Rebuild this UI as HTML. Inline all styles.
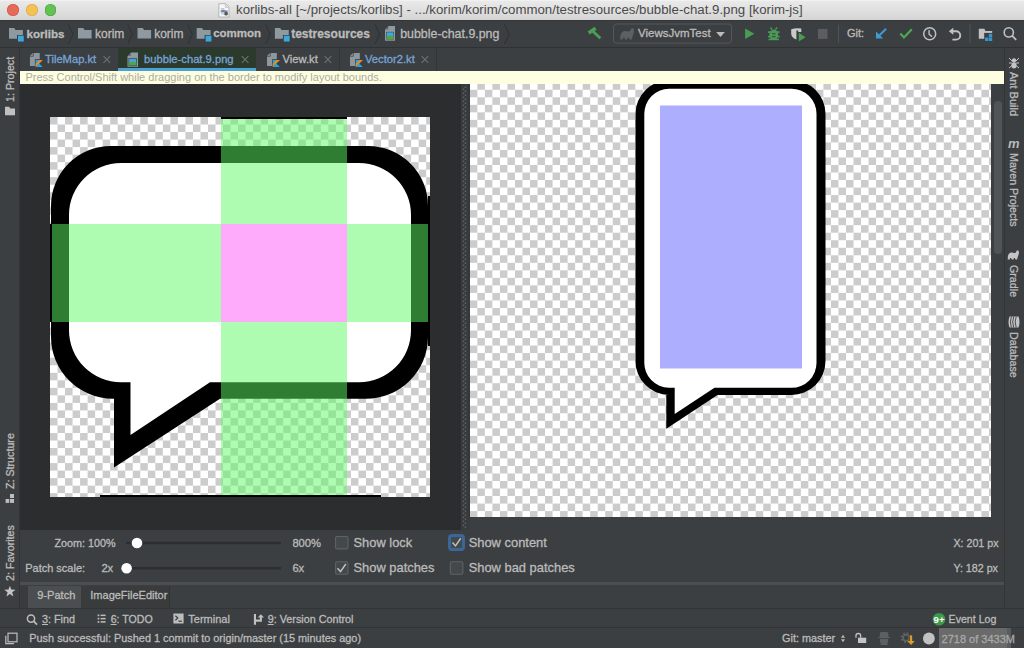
<!DOCTYPE html>
<html><head><meta charset="utf-8">
<style>
*{box-sizing:border-box}
html,body{margin:0;padding:0}
body{width:1024px;height:648px;overflow:hidden;position:relative;background:#3c3f41;font-family:"Liberation Sans",sans-serif;color:#bbbbbb}
.a{position:absolute}
.t{position:absolute;white-space:nowrap;line-height:1;-webkit-text-stroke:0.3px currentColor}
svg{position:absolute;overflow:visible}
.chk{background-image:conic-gradient(#cccccc 0 25%,#ffffff 0 50%,#cccccc 0 75%,#ffffff 0);background-size:15.05px 15.05px}
.chk2{background-image:conic-gradient(#ffffff 0 25%,#cccccc 0 50%,#ffffff 0 75%,#cccccc 0);background-size:15.05px 15.05px}
</style></head><body>

<!-- TITLE BAR -->
<div class="a" style="left:0;top:0;width:1024px;height:21px;background:linear-gradient(#f4f4f4 0,#e9e9e9 1.5px,#d5d5d5 19.5px);border-bottom:1px solid #343638"></div>
<div class="a" style="left:7.2px;top:4.4px;width:11.9px;height:11.9px;border-radius:50%;background:#e46b5c;box-shadow:inset 0 0 0 0.6px #cf5546"></div>
<div class="a" style="left:25.9px;top:4.4px;width:11.9px;height:11.9px;border-radius:50%;background:#f3c255;box-shadow:inset 0 0 0 0.6px #d9a53c"></div>
<div class="a" style="left:44.6px;top:4.4px;width:11.9px;height:11.9px;border-radius:50%;background:#63c254;box-shadow:inset 0 0 0 0.6px #4ea43f"></div>
<svg style="left:0;top:0" width="300" height="22"><path d="M218.9 3.7H225.6L229 7.1V17H218.9Z" fill="#f7f7f7" stroke="#a8a8a8" stroke-width="0.8"/><path d="M225.3 3.9V7.4H228.8" fill="#e0e0e0" stroke="#b5b5b5" stroke-width="0.6"/><rect x="220.8" y="8" width="3.6" height="1.6" fill="#d9c9a8"/><path d="M220.8 10.3Q223 9.2 225.5 10.2Q227 10.6 227.6 10.2V12.6H220.8Z" fill="#6f86c9"/><rect x="221.2" y="12.6" width="3" height="2" fill="#c9d2dc"/><circle cx="226.1" cy="13.7" r="1.9" fill="#5a5a52"/></svg>
<div class="t" style="left:236px;top:2.8px;font-size:13.25px;color:#4a4a4a;-webkit-text-stroke:0">korlibs-all [~/projects/korlibs] - .../korim/korim/common/testresources/bubble-chat.9.png [korim-js]</div>

<!-- NAV BAR -->
<div class="a" style="left:0;top:47px;width:1024px;height:1px;background:#2f3133"></div>
<div id="nav">
<svg style="left:0;top:0" width="1024" height="48">
 <defs>
  <g id="fold"><path d="M0 0H5.2L6.6 2H13.6V10.6H0Z" fill="#8e99a0"/></g>
  <g id="mfold"><path d="M0 0H5.2L6.6 2H13.9V10.8H0Z" fill="#8e99a0"/><rect x="8" y="7" width="7.2" height="7" fill="#2f3133"/><rect x="8.8" y="7.6" width="6" height="6" fill="#3da7d8"/></g>
  <path id="chev" d="M0 0L4.6 9.8L0 19.6" fill="none" stroke="#2e3032" stroke-width="1"/>
 </defs>
 <use href="#mfold" x="9" y="28"/>
 <use href="#chev" x="68.5" y="24.4"/>
 <use href="#fold" x="78" y="28"/>
 <use href="#chev" x="127.8" y="24.4"/>
 <use href="#fold" x="137.5" y="28"/>
 <use href="#chev" x="187.8" y="24.4"/>
 <use href="#mfold" x="196.7" y="28"/>
 <use href="#chev" x="265.7" y="24.4"/>
 <use href="#mfold" x="274.9" y="28"/>
 <use href="#chev" x="375" y="24.4"/>
 <g transform="translate(385,26.1)">
  <path d="M3.5 0H10V14.6H0V3.5Z" fill="#8e99a0"/>
  <path d="M0 3.3L3.3 0V3.3Z" fill="#3c3f41" opacity="0.5"/>
  <rect x="1.2" y="5.8" width="7.8" height="7.4" fill="#2f3133"/>
  <rect x="1.6" y="6.2" width="7" height="6.6" fill="#43a6db"/>
  <path d="M1.6 10.6Q4 8.4 8.6 10.4V12.8H1.6Z" fill="#4fa83f"/>
 </g>
 <use href="#chev" x="504.5" y="24.4"/>
 <!-- hammer -->
 <path d="M588.6 33L595.6 28.2" stroke="#4a9f52" stroke-width="3.6"/><path d="M592.2 30.8L600.4 38.3" stroke="#4a9f52" stroke-width="2.9"/>
 <!-- dropdown -->
 <rect x="613.5" y="24" width="118" height="19.2" rx="3" fill="none" stroke="#55585a" stroke-width="1"/>
 <path d="M620.2 39.6L620.5 35.2Q621.4 31.2 625 31L628.4 31.6Q630.4 31.4 631 29.2Q632 27.4 633.4 28.6Q634.6 30 633.7 33.2L632.6 36.2L631.8 39.6H629.7L629.1 37.6H627.9L627.3 39.6H625L624.5 37.8H623.3L622.7 39.6Z" fill="#5d6062"/>
 <path d="M716.1 32H724.9L720.5 37.1Z" fill="#bbbbbb"/>
 <!-- run -->
 <path d="M745.1 28.5L754.4 33.8L745.1 39.1Z" fill="#499c54"/>
 <!-- debug bug -->
 <g fill="#499c54">
  <ellipse cx="773.8" cy="34.6" rx="4.4" ry="5.2"/>
  <rect x="768" y="31.3" width="11.6" height="1.6"/>
  <rect x="768" y="35.8" width="11.6" height="1.6"/>
  <rect x="768.6" y="38.6" width="10.4" height="1.6"/>
  <path d="M770.5 27.5L772.2 29.6M777.1 27.5L775.4 29.6" stroke="#499c54" stroke-width="1.4"/>
 </g>
 <path d="M772 33.8H775.6M772 36.7H775.6" stroke="#3c3f41" stroke-width="1"/>
 <!-- coverage -->
 <path d="M791.2 29.2Q796 27.6 801.3 28.6V32H798.2V30.4H796.4V39.6Q791.2 37.6 791.2 33.5Z" fill="#c9c9c9"/>
 <path d="M798.8 32.8L805.6 37.2L798.8 41.5Z" fill="#499c54"/>
 <!-- stop -->
 <rect x="818" y="28.9" width="9.5" height="10" fill="#5b5d5f"/>
 <rect x="838" y="24.7" width="1" height="18" fill="#515456"/>
 <!-- git arrow -->
 <path d="M886.1 28.8L877.2 37.6" stroke="#3d9bd6" stroke-width="2" fill="none"/>
 <path d="M876 31.4V38.6H883.2Z" fill="#3d9bd6"/>
 <!-- check -->
 <path d="M900.3 33.6L904 37.4L911.8 29.3" stroke="#4da953" stroke-width="2.2" fill="none"/>
 <!-- clock -->
 <circle cx="929.7" cy="33.7" r="6" fill="none" stroke="#c1c1c1" stroke-width="1.5"/>
 <path d="M929.1 30V34.2L932 36.6" stroke="#c1c1c1" stroke-width="1.4" fill="none"/>
 <!-- undo -->
 <path d="M951 31.3H956.1A4.15 4.15 0 0 1 956.1 39.6H952.4" stroke="#c1c1c1" stroke-width="1.9" fill="none"/>
 <path d="M948.8 31.3L953.3 27.8V34.8Z" fill="#c1c1c1"/>
 <rect x="969.5" y="24.5" width="1" height="18.3" fill="#515456"/>
 <!-- project structure folder -->
 <path d="M978.8 28.8H984.4L985.4 30.9H992.2V38.8H978.8Z" fill="#c0c2c4"/>
 <rect x="984.2" y="32.9" width="9" height="9" fill="#3c3f41"/>
 <rect x="985" y="37.5" width="3.4" height="3.5" fill="#3596cc"/>
 <rect x="988.8" y="33.8" width="3.4" height="3.4" fill="#3596cc"/>
 <rect x="988.8" y="37.5" width="3.4" height="3.5" fill="#3596cc"/>
 <!-- search -->
 <circle cx="1008.8" cy="32.4" r="4.6" fill="none" stroke="#c0c0c0" stroke-width="1.6"/>
 <path d="M1012.2 35.8L1016.2 39.8" stroke="#c0c0c0" stroke-width="1.8"/>
</svg>
<div class="t" style="left:26.5px;top:28.2px;font-size:11.6px;font-weight:bold">korlibs</div>
<div class="t" style="left:95px;top:28.2px;font-size:12px">korim</div>
<div class="t" style="left:154.2px;top:28.2px;font-size:12px">korim</div>
<div class="t" style="left:213.2px;top:28.2px;font-size:11.5px;font-weight:bold">common</div>
<div class="t" style="left:291.2px;top:28.2px;font-size:12px;font-weight:bold">testresources</div>
<div class="t" style="left:400.2px;top:28.2px;font-size:12.4px">bubble-chat.9.png</div>
<div class="t" style="left:638px;top:28.2px;font-size:11.5px">ViewsJvmTest</div>
<div class="t" style="left:847px;top:28.2px;font-size:11px">Git:</div>
</div>

<!-- TABS ROW -->
<div class="a" style="left:20px;top:48px;width:98px;height:23px;background:#3c3f41"></div>
<div class="a" style="left:118px;top:48px;width:138px;height:23px;background:#2b3a2d"></div>
<div class="a" style="left:118px;top:68px;width:138px;height:3px;background:#4aa3d4"></div>
<div class="a" style="left:339px;top:48px;width:1px;height:23px;background:#333537"></div>
<div class="a" style="left:436px;top:48px;width:1px;height:23px;background:#333537"></div>
<div class="t" style="left:45px;top:54.2px;font-size:11.2px;color:#78a4d5">TileMap.kt</div>
<div class="t" style="left:144px;top:54.2px;font-size:11.2px;color:#78a4d5">bubble-chat.9.png</div>
<div class="t" style="left:282.5px;top:54.2px;font-size:11.2px;color:#bbbbbb">View.kt</div>
<div class="t" style="left:365px;top:54.2px;font-size:11.2px;color:#78a4d5">Vector2.kt</div>


<svg style="left:0;top:0" width="1024" height="100">
 <defs>
  <g id="ktf">
   <path d="M3.6 0H9.8V13H0V3.6Z" fill="#8e979e"/>
   <path d="M0 3.1L3.1 0V3.1Z" fill="#8e979e"/>
   <path d="M0 3.35H3.35V0" stroke="#3c3f41" stroke-width="0.7" fill="none"/>
   <rect x="5" y="6.3" width="8" height="8" fill="#3c3f41"/>
   <path d="M5.7 7H12.8L5.7 14.1Z" fill="#18a8f0"/>
   <path d="M5.7 14.1L9.25 10.55L12.8 14.1Z" fill="#18a8f0"/>
   <path d="M9.6 7H12.8L5.7 14.1V10.9Z" fill="#f0891c"/>
  </g>
  <path id="cls" d="M0 0L6.6 6.6M6.6 0L0 6.6" stroke="#6e7072" stroke-width="1.1"/>
 </defs>
 <use href="#ktf" x="29.9" y="52.9"/>
 <use href="#ktf" x="267" y="52.9"/>
 <use href="#ktf" x="350" y="52.9"/>
 <g transform="translate(127.5,52.6)">
  <path d="M3.5 0H10.5V14.2H0V3.5Z" fill="#8e99a0"/>
  <path d="M0 3.3L3.3 0V3.3Z" fill="#3c3f41" opacity="0.5"/>
  <rect x="1.1" y="5.6" width="8.3" height="7.6" fill="#2b2d2e"/>
  <rect x="1.6" y="6.1" width="7.3" height="6.6" fill="#43a6db"/>
  <path d="M1.6 10.4Q4 8.2 8.9 10.2V12.7H1.6Z" fill="#4fa83f"/>
 </g>
 <use href="#cls" x="103.5" y="56.2"/>
 <use href="#cls" x="241.8" y="56.2"/>
 <use href="#cls" x="324.6" y="56.2"/>
 <use href="#cls" x="421.6" y="56.2"/>
</svg>

<!-- YELLOW BAR -->
<div class="a" style="left:20px;top:71px;width:984px;height:13px;background:#fefee0"></div>
<div class="t" style="left:25.4px;top:72.3px;font-size:11px;color:#acaca4;-webkit-text-stroke:0">Press Control/Shift while dragging on the border to modify layout bounds.</div>

<!-- LEFT EDITOR -->
<div class="a" style="left:20px;top:84px;width:441px;height:446px;background:#2c2d2f"></div>
<div class="a chk2" style="left:50px;top:117px;width:380px;height:380px"></div>
<svg style="left:0;top:0" width="1024" height="648">
 <path d="M111 146H368A60 60 0 0 1 428 206V337A62 62 0 0 1 366 398.7H220L114 467.5V398.7H113A62 62 0 0 1 51 336.7V206A60 60 0 0 1 111 146Z" fill="#000"/>
 <path d="M121 163H359A52 52 0 0 1 411 215V330.3A52 52 0 0 1 359 382.3H210L130.5 435V382.3H121A52 52 0 0 1 69 330.3V215A52 52 0 0 1 121 163Z" fill="#fff"/>
 <rect x="221" y="117" width="126" height="380" fill="rgba(92,250,100,0.5)"/>
 <rect x="50" y="224" width="171" height="98" fill="rgba(92,250,100,0.5)"/>
 <rect x="347" y="224" width="83" height="98" fill="rgba(92,250,100,0.5)"/>
 <rect x="221" y="224" width="126" height="98" fill="#ffabfb"/>
 <rect x="221" y="117" width="126" height="2" fill="#000"/>
 <rect x="50" y="224" width="2" height="98" fill="#000"/>
 <rect x="428" y="196" width="2" height="150" fill="#000"/>
 <rect x="100" y="495" width="281" height="2" fill="#000"/>
</svg>

<!-- SPLITTER -->
<div class="a" style="left:460.6px;top:84px;width:9.4px;height:446px;background:#393c3e"></div><div class="a" style="left:468.4px;top:84px;width:1.6px;height:433px;background:#353739"></div>
<svg style="left:0;top:0" width="1024" height="648"><defs><pattern id="dots" x="460" y="84" width="8" height="4" patternUnits="userSpaceOnUse"><circle cx="3.4" cy="1.2" r="0.8" fill="#626668"/><circle cx="5.4" cy="3.2" r="0.8" fill="#626668"/></pattern></defs><rect x="462" y="86" width="5" height="442" fill="url(#dots)"/></svg>

<!-- RIGHT PREVIEW -->
<div class="a chk" style="left:470px;top:84px;width:521px;height:433px;background-position:-0.2px -1.75px"></div>
<svg style="left:0;top:0" width="1024" height="648">
 <path d="M669 80H791A34 34 0 0 1 825.5 114V361A34 34 0 0 1 791 395H717.5L666.3 428.7V395H669A34 34 0 0 1 635.5 361V114A34 34 0 0 1 669 80Z" fill="#000"/>
 <path d="M669 88.7H791A25 25 0 0 1 816.5 114V362A25 25 0 0 1 791 387.8H714.5L674.7 414V387.8H669A25 25 0 0 1 644.3 362V114A25 25 0 0 1 669 88.7Z" fill="#fff"/>
 <rect x="660" y="105.5" width="142" height="263" fill="#aeaeff"/>
</svg>
<div class="a" style="left:470px;top:71px;width:534px;height:13px;background:#fefee0"></div>
<div class="a" style="left:994px;top:101px;width:8px;height:153px;border-radius:4px;background:#515457"></div>

<!-- CONTROLS -->
<div class="a" style="left:20px;top:530px;width:984px;height:52px;background:#3c3f41"></div>
<div class="a" style="left:20px;top:582px;width:984px;height:3px;background:#4b4e50"></div>

<!-- BOTTOM TABS -->
<div class="a" style="left:20px;top:585px;width:984px;height:23px;background:#3c3f41"></div>

<!-- LEFT SIDEBAR -->
<div class="a" style="left:0;top:48px;width:20px;height:560px;background:#3c3f41;border-right:1px solid #323436"></div>
<!-- RIGHT SIDEBAR -->
<div class="a" style="left:1004px;top:48px;width:20px;height:560px;background:#3c3f41;border-left:1px solid #323436"></div>

<!-- TOOL WINDOW BAR -->
<div class="a" style="left:0;top:608px;width:1024px;height:20px;background:#3c3f41;border-top:1px solid #323436;border-bottom:1px solid #323436"></div>


<!-- SIDEBAR CONTENT -->
<div class="t" style="left:4.6px;top:101.5px;font-size:10.7px;transform-origin:0 0;transform:rotate(-90deg)">1: Project</div>
<div class="t" style="left:4.6px;top:489px;font-size:10.7px;transform-origin:0 0;transform:rotate(-90deg)">Z: Structure</div>
<div class="t" style="left:4.6px;top:580.5px;font-size:10.7px;transform-origin:0 0;transform:rotate(-90deg)">2: Favorites</div>
<div class="t" style="left:1019.4px;top:72.3px;font-size:11px;transform-origin:0 0;transform:rotate(90deg)">Ant Build</div>
<div class="t" style="left:1019.4px;top:152.5px;font-size:10.7px;transform-origin:0 0;transform:rotate(90deg)">Maven Projects</div>
<div class="t" style="left:1019.4px;top:265.3px;font-size:10.7px;transform-origin:0 0;transform:rotate(90deg)">Gradle</div>
<div class="t" style="left:1019.4px;top:332px;font-size:10.7px;transform-origin:0 0;transform:rotate(90deg)">Database</div>
<svg style="left:0;top:0" width="1024" height="648">
 <!-- project folder -->
 <path d="M5 106.7H9L10.4 108.4H15V115.2H5Z" fill="#c0c0c0"/>
 <!-- structure -->
 <rect x="5.6" y="499" width="3.6" height="3.9" fill="#bdbdbd"/>
 <rect x="10" y="494" width="4" height="4" fill="#bdbdbd"/>
 <rect x="10" y="499" width="4" height="3.9" fill="#bdbdbd"/>
 <!-- star -->
 <path d="M9.9 585.7L11.3 589.6L15.6 589.7L12.2 592.3L13.4 596.4L9.9 594L6.4 596.4L7.6 592.3L4.2 589.7L8.5 589.6Z" fill="#c4c4c4"/>
 <!-- ant -->
 <g fill="#c4c4c4"><ellipse cx="1014" cy="60.5" rx="2.2" ry="2.2"/><ellipse cx="1014" cy="65.5" rx="2.6" ry="3"/><path d="M1009 58L1012 61M1019 58L1016 61M1009 63H1012M1016 63H1019M1009 68L1012 65.5M1019 68L1016 65.5" stroke="#c4c4c4" stroke-width="1"/></g>
 <!-- maven m -->
 <text x="1008" y="147.5" font-family="Liberation Sans" font-style="italic" font-weight="bold" font-size="13" fill="#b9b9b9">m</text>
 <!-- gradle elephant -->
 <path d="M620.2 39.6L620.5 35.2Q621.4 31.2 625 31L628.4 31.6Q630.4 31.4 631 29.2Q632 27.4 633.4 28.6Q634.6 30 633.7 33.2L632.6 36.2L631.8 39.6H629.7L629.1 37.6H627.9L627.3 39.6H625L624.5 37.8H623.3L622.7 39.6Z" fill="#c4c4c4" transform="translate(1007.7 249.7) scale(0.81) translate(-620.2 -27.4)"/>
 <!-- database -->
 <g transform="rotate(90 1014 322)"><path d="M1008.5 317.5Q1014 315.5 1019.5 317.5V326.5Q1014 328.5 1008.5 326.5Z" fill="#c4c4c4"/><path d="M1008.5 319.8Q1014 321.8 1019.5 319.8M1008.5 322.3Q1014 324.3 1019.5 322.3M1008.5 324.6Q1014 326.6 1019.5 324.6" stroke="#3c3f41" stroke-width="0.9" fill="none"/></g>
</svg>

<!-- CONTROLS CONTENT -->
<div class="t" style="left:54.5px;top:537.8px;font-size:10.8px">Zoom: 100%</div>
<div class="t" style="left:292.4px;top:537.8px;font-size:11.2px">800%</div>
<div class="t" style="left:25.2px;top:563.2px;font-size:11px">Patch scale:</div>
<div class="t" style="left:101.4px;top:563.2px;font-size:11.2px">2x</div>
<div class="t" style="left:292.4px;top:563.2px;font-size:11.2px">6x</div>
<div class="t" style="left:353.5px;top:536.8px;font-size:12.9px">Show lock</div>
<div class="t" style="left:468.7px;top:536.8px;font-size:12.9px">Show content</div>
<div class="t" style="left:353.5px;top:562.2px;font-size:12.9px">Show patches</div>
<div class="t" style="left:468.7px;top:562.2px;font-size:12.9px">Show bad patches</div>
<div class="t" style="left:953.4px;top:537.8px;font-size:10.7px">X: 201 px</div>
<div class="t" style="left:953.4px;top:562.8px;font-size:10.7px">Y: 182 px</div>
<svg style="left:0;top:0" width="1024" height="648">
 <rect x="126.2" y="541.8" width="154.6" height="2.4" fill="#2b2d2f"/>
 <rect x="121.8" y="567" width="159" height="2.4" fill="#2b2d2f"/>
 <circle cx="137" cy="543" r="5.3" fill="#ffffff"/>
 <circle cx="126.6" cy="568.2" r="5.3" fill="#ffffff"/>
 <rect x="335.6" y="536.5" width="12.4" height="12.4" rx="1.5" fill="#43484a" stroke="#5f6264" stroke-width="1.1"/>
 <rect x="335.6" y="561.8" width="12.4" height="12.4" rx="1.5" fill="#43484a" stroke="#5f6264" stroke-width="1.1"/>
 <path d="M337.5 568.3L340.5 571.6L345.8 564" stroke="#c0c0c0" stroke-width="1.5" fill="none"/>
 <rect x="449.5" y="535.5" width="14" height="14" rx="2.5" fill="#43484a" stroke="#3a6699" stroke-width="3"/>
 <path d="M452.5 542.6L455.5 545.9L460.8 538.3" stroke="#c0c0c0" stroke-width="1.5" fill="none"/>
 <rect x="450.4" y="561.8" width="12.4" height="12.4" rx="1.5" fill="#43484a" stroke="#5f6264" stroke-width="1.1"/>
</svg>

<!-- BOTTOM TABS CONTENT -->
<div class="a" style="left:20px;top:585.5px;width:8.3px;height:22.5px;background:#393b3d"></div>
<div class="a" style="left:28.3px;top:585.5px;width:53.1px;height:22.5px;background:#4b4e50"></div>
<div class="a" style="left:81.4px;top:585.5px;width:88.9px;height:22.5px;background:#393b3d;border-right:1px solid #323436"></div>
<div class="t" style="left:37.2px;top:589.5px;font-size:11.1px">9-Patch</div>
<div class="t" style="left:90.3px;top:589.5px;font-size:11px">ImageFileEditor</div>

<!-- TOOL WINDOW BAR CONTENT -->
<div class="t" style="left:42px;top:613.8px;font-size:10.8px"><u>3</u>: Find</div>
<div class="t" style="left:110.7px;top:613.8px;font-size:10.6px"><u>6</u>: TODO</div>
<div class="t" style="left:188.3px;top:613.8px;font-size:11px">Terminal</div>
<div class="t" style="left:267.7px;top:613.8px;font-size:10.8px"><u>9</u>: Version Control</div>
<div class="t" style="left:948.6px;top:613.8px;font-size:10.6px">Event Log</div>
<svg style="left:0;top:0" width="1024" height="648">
 <circle cx="31" cy="618.6" r="3.6" fill="none" stroke="#bdbdbd" stroke-width="1.5"/>
 <path d="M33.6 621.2L37 624.6" stroke="#bdbdbd" stroke-width="1.7"/>
 <g fill="#bdbdbd"><rect x="97.6" y="614.5" width="1.7" height="1.7"/><rect x="97.6" y="617.8" width="1.7" height="1.7"/><rect x="97.6" y="621.1" width="1.7" height="1.7"/><rect x="100.6" y="614.6" width="5" height="1.5"/><rect x="100.6" y="617.9" width="5" height="1.5"/><rect x="100.6" y="621.2" width="5" height="1.5"/></g>
 <rect x="173.4" y="613.5" width="10.2" height="10" fill="#bdbdbd"/>
 <path d="M175.4 615.8L177.8 618L175.4 620.2" stroke="#3c3f41" stroke-width="1.2" fill="none"/>
 <rect x="178.5" y="620.6" width="3.4" height="1.2" fill="#3c3f41"/>
 <path d="M253.9 613.9H256V619.4H259.9V617.5H257.8L260.8 614.2L264 617.5H261.9V621.7H256V624.7H253.9Z" fill="#c0c0c0"/>
 <circle cx="939" cy="619.3" r="6.3" fill="#3c9a46"/>
 <text x="933.6" y="622.6" font-family="Liberation Sans" font-weight="bold" font-size="9.5" fill="#ffffff">9+</text>
</svg>

<!-- STATUS BAR -->
<div class="a" style="left:939.2px;top:628px;width:67.5px;height:20px;background:#6a6a6a"></div>
<div class="a" style="left:1006.7px;top:628px;width:4.1px;height:20px;background:#5a5b5c"></div>
<div class="t" style="left:29.3px;top:633.4px;font-size:10.9px">Push successful: Pushed 1 commit to origin/master (15 minutes ago)</div>
<div class="t" style="left:782px;top:633.4px;font-size:10.9px">Git: master</div>
<div class="t" style="left:941.6px;top:633.5px;font-size:11px;color:#a8a8a8">2718 of 3433M</div>
<svg style="left:0;top:0" width="1024" height="648">
 <rect x="8" y="633.2" width="9" height="8.6" fill="none" stroke="#bdbdbd" stroke-width="1.2"/>
 <path d="M5.8 635.8V643.6H14" stroke="#bdbdbd" stroke-width="1.2" fill="none"/>
 <path d="M841 637.8L843 634.8L845 637.8ZM841 639.2H845L843 642.2Z" fill="#bbbbbb"/>
 <rect x="858" y="637.7" width="8.2" height="5.3" fill="#c5c5c5"/>
 <path d="M856 637.7V635.5Q856 633.5 858.3 633.5Q860.6 633.5 860.6 635.5V637.7" stroke="#c5c5c5" stroke-width="1.3" fill="none"/>
 <path d="M879.8 637V633.6Q879.8 632 881.4 632H886.8Q888.4 632 888.4 633.6V637H890V638H878.3V637Z" fill="#5d6062"/>
 <path d="M880 638.8H888.2V641.2Q888.2 642.6 887 643.2L888.4 645H879.8L881.2 643.2Q880 642.6 880 641.2Z" fill="#5d6062"/>
 <circle cx="906.1" cy="637.7" r="4.3" fill="none" stroke="#5f6367" stroke-width="2.4" stroke-dasharray="1.7 1.68"/>
 <circle cx="906.1" cy="637.7" r="3" fill="none" stroke="#5f6367" stroke-width="1.6"/>
 <path d="M911 635.4V642" stroke="#3c3f41" stroke-width="3.6"/>
 <path d="M911 635.4V642" stroke="#e09a25" stroke-width="2.3"/>
 <path d="M907.5 641H914.7L911.1 645Z" fill="#e09a25"/>
 <circle cx="928.9" cy="638.5" r="5.9" fill="#c2c2c2"/>
</svg>

</body></html>
